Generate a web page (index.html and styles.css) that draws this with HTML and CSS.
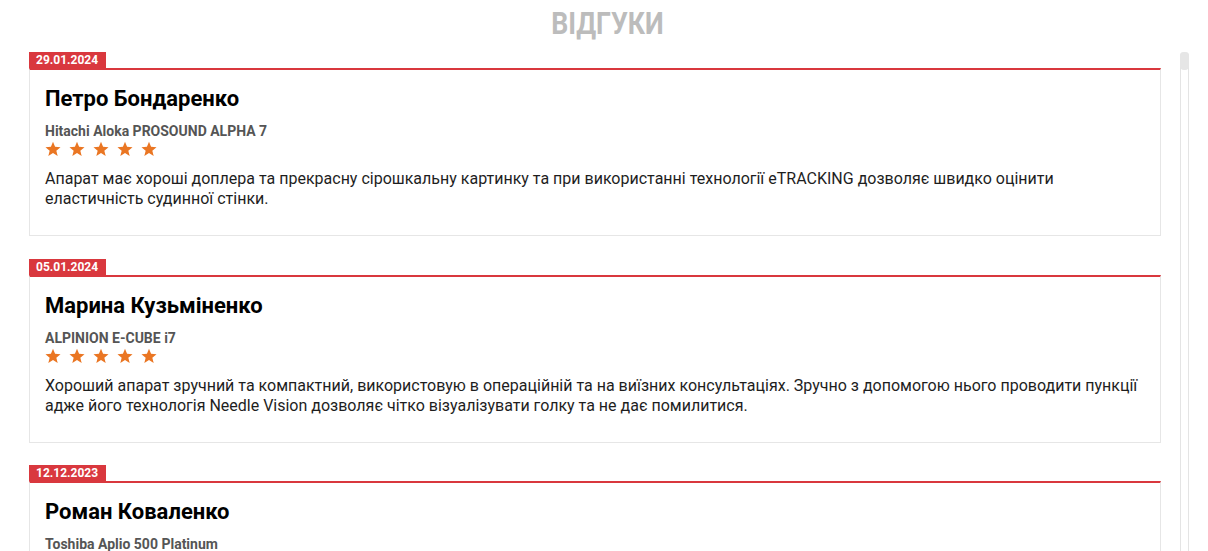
FILE: index.html
```html
<!DOCTYPE html>
<html lang="uk">
<head>
<meta charset="utf-8">
<title>Відгуки</title>
<link rel="stylesheet" href="styles.css">
</head>
<body>
<div class="page">
  <h2 class="title"><span>ВІДГУКИ</span></h2>
  <div class="scroller">
    <div class="list">
      <div class="review">
        <div class="date">29.01.2024</div>
        <div class="card">
          <div class="name">Петро Бондаренко</div>
          <div class="model">Hitachi Aloka PROSOUND ALPHA 7</div>
          <div class="stars">
            <svg viewBox="0 0 24 24"><path d="M12 1.2l3.1 7.6 8.2.5-6.3 5.2 2 8-7-4.4-7 4.4 2-8L.7 9.3l8.2-.5z"/></svg>
            <svg viewBox="0 0 24 24"><path d="M12 1.2l3.1 7.6 8.2.5-6.3 5.2 2 8-7-4.4-7 4.4 2-8L.7 9.3l8.2-.5z"/></svg>
            <svg viewBox="0 0 24 24"><path d="M12 1.2l3.1 7.6 8.2.5-6.3 5.2 2 8-7-4.4-7 4.4 2-8L.7 9.3l8.2-.5z"/></svg>
            <svg viewBox="0 0 24 24"><path d="M12 1.2l3.1 7.6 8.2.5-6.3 5.2 2 8-7-4.4-7 4.4 2-8L.7 9.3l8.2-.5z"/></svg>
            <svg viewBox="0 0 24 24"><path d="M12 1.2l3.1 7.6 8.2.5-6.3 5.2 2 8-7-4.4-7 4.4 2-8L.7 9.3l8.2-.5z"/></svg>
          </div>
          <p class="text">Апарат має хороші доплера та прекрасну сірошкальну картинку та при використанні технології eTRACKING дозволяє швидко оцінити еластичність судинної стінки.</p>
        </div>
      </div>
      <div class="review">
        <div class="date">05.01.2024</div>
        <div class="card">
          <div class="name">Марина Кузьміненко</div>
          <div class="model">ALPINION E-CUBE i7</div>
          <div class="stars">
            <svg viewBox="0 0 24 24"><path d="M12 1.2l3.1 7.6 8.2.5-6.3 5.2 2 8-7-4.4-7 4.4 2-8L.7 9.3l8.2-.5z"/></svg>
            <svg viewBox="0 0 24 24"><path d="M12 1.2l3.1 7.6 8.2.5-6.3 5.2 2 8-7-4.4-7 4.4 2-8L.7 9.3l8.2-.5z"/></svg>
            <svg viewBox="0 0 24 24"><path d="M12 1.2l3.1 7.6 8.2.5-6.3 5.2 2 8-7-4.4-7 4.4 2-8L.7 9.3l8.2-.5z"/></svg>
            <svg viewBox="0 0 24 24"><path d="M12 1.2l3.1 7.6 8.2.5-6.3 5.2 2 8-7-4.4-7 4.4 2-8L.7 9.3l8.2-.5z"/></svg>
            <svg viewBox="0 0 24 24"><path d="M12 1.2l3.1 7.6 8.2.5-6.3 5.2 2 8-7-4.4-7 4.4 2-8L.7 9.3l8.2-.5z"/></svg>
          </div>
          <p class="text">Хороший апарат зручний та компактний, використовую в операційній та на виїзних консультаціях. Зручно з допомогою нього проводити пункції адже його технологія Needle Vision дозволяє чітко візуалізувати голку та не дає помилитися.</p>
        </div>
      </div>
      <div class="review">
        <div class="date">12.12.2023</div>
        <div class="card">
          <div class="name">Роман Коваленко</div>
          <div class="model">Toshiba Aplio 500 Platinum</div>
          <div class="stars">
            <svg viewBox="0 0 24 24"><path d="M12 1.2l3.1 7.6 8.2.5-6.3 5.2 2 8-7-4.4-7 4.4 2-8L.7 9.3l8.2-.5z"/></svg>
            <svg viewBox="0 0 24 24"><path d="M12 1.2l3.1 7.6 8.2.5-6.3 5.2 2 8-7-4.4-7 4.4 2-8L.7 9.3l8.2-.5z"/></svg>
            <svg viewBox="0 0 24 24"><path d="M12 1.2l3.1 7.6 8.2.5-6.3 5.2 2 8-7-4.4-7 4.4 2-8L.7 9.3l8.2-.5z"/></svg>
            <svg viewBox="0 0 24 24"><path d="M12 1.2l3.1 7.6 8.2.5-6.3 5.2 2 8-7-4.4-7 4.4 2-8L.7 9.3l8.2-.5z"/></svg>
            <svg viewBox="0 0 24 24"><path d="M12 1.2l3.1 7.6 8.2.5-6.3 5.2 2 8-7-4.4-7 4.4 2-8L.7 9.3l8.2-.5z"/></svg>
          </div>
          <p class="text">Відмінний апарат з чудовою якістю зображення.</p>
        </div>
      </div>
    </div>
    <div class="track"><div class="thumb"></div></div>
  </div>
</div>
</body>
</html>
```

FILE: styles.css
```css
html, body {
  margin: 0;
  padding: 0;
  background: #fff;
  height: 100%;
  overflow: hidden;
}
body {
  font-family: Roboto, "Noto Sans", sans-serif;
  color: #222;
}
.page {
  height: 551px;
  display: flex;
  flex-direction: column;
}
.title {
  margin: 0;
  height: 52px;
  display: flex;
  justify-content: center;
  align-items: flex-start;
  padding-top: 6px;
  box-sizing: border-box;
  font-size: 31px;
  line-height: 36px;
  font-weight: 700;
  color: #bcbcbc;
}
.title span {
  display: inline-block;
  transform: scaleX(0.86);
  margin-left: 6px;
}
.scroller {
  flex: 1;
  display: flex;
  gap: 19px;
  padding: 0 19px 0 29px;
  min-height: 0;
  overflow: hidden;
}
.list {
  flex: 1;
  display: flex;
  flex-direction: column;
  gap: 22.5px;
}
.review {
  display: flex;
  flex-direction: column;
  align-items: flex-start;
}
.date {
  background: #d9383e;
  color: #fff;
  font-size: 12px;
  font-weight: 700;
  line-height: 16px;
  padding: 0 8px 0 7px;
}
.card {
  align-self: stretch;
  border: 1px solid #e6e6e6;
  border-top: 2px solid #d9383e;
  padding: 17px 15px 26px;
}
.name {
  font-size: 22px;
  font-weight: 700;
  line-height: 24px;
  color: #000;
}
.model {
  margin-top: 12px;
  font-size: 14px;
  font-weight: 700;
  line-height: 16px;
  color: #555;
}
.stars {
  margin-top: 3px;
  height: 15px;
  display: flex;
  gap: 8px;
}
.stars svg {
  width: 16px;
  height: 16px;
  fill: #ea7623;
  margin-top: -1px;
}
.text {
  margin: 12px 0 0;
  font-size: 16px;
  line-height: 20px;
  color: #1e1e1e;
}
.track {
  width: 7px;
  border-left: 1px solid #e4e4e4;
  border-right: 1px solid #e4e4e4;
  border-radius: 4px 4px 0 0;
  position: relative;
}
.thumb {
  height: 18px;
  margin: 0 -1px;
  background: #e6e6e6;
  border-radius: 4px;
}
```
